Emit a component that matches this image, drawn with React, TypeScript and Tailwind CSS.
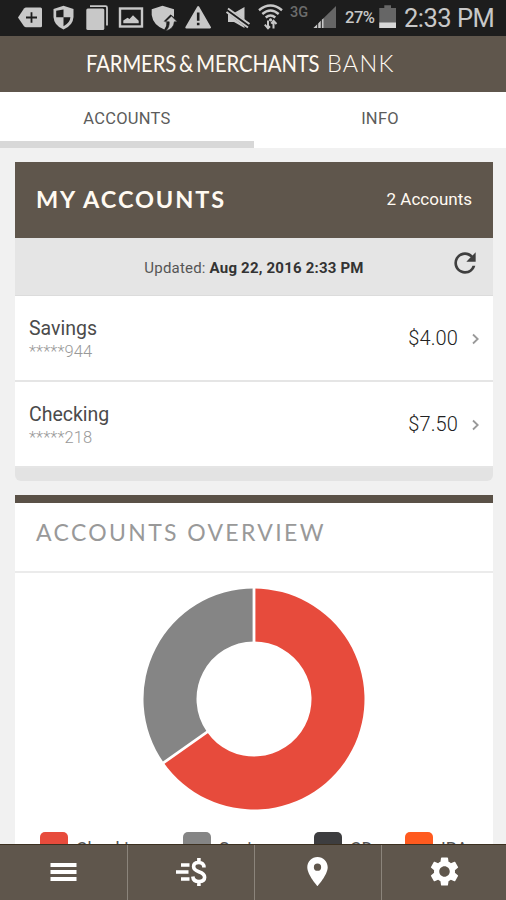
import { MdLocationOn, MdRefresh, MdSettings } from "react-icons/md";

const accounts = [
  { name: "Savings", mask: "*****944", balance: "$4.00" },
  { name: "Checking", mask: "*****218", balance: "$7.50" },
];

const legend = [
  { label: "Checking", swatch: "bg-[#e74b3c]", gap: "w-[143px]" },
  { label: "Savings", swatch: "bg-[#858585]", gap: "w-[131px]" },
  { label: "CD", swatch: "bg-[#3d3d3f]", gap: "w-[91px]" },
  { label: "IRA", swatch: "bg-[#ff5a1f]", gap: "w-[70px]" },
];

function StatusBar() {
  return (
    <div className="flex h-9 shrink-0 bg-[#1d1d1d] pl-[17px] text-[#c8c8c8]">
      <svg className="w-[26px] h-9" viewBox="17 0 26 36">
        <path d="M18 17.5 24 8.5Q25 7.5 26 7.5H40.5Q42 7.5 42 9V26Q42 27.3 40.5 27.3H26Q25 27.3 24 26.2Z" fill="currentColor" />
        <path d="M31.5 12.2v10.6M26 17.5h11" stroke="#1d1d1d" strokeWidth="1.8" />
      </svg>
      <svg className="ml-[9px] w-[24px] h-9" viewBox="52 0 24 36">
        <path d="M63.5 5.8 73.5 9V17Q73 25.5 63.5 29.5Q54 25.5 53.5 17V9Z" fill="currentColor" />
        <path d="M63.5 9.5V17.3H56.2V10.8ZM63.5 17.3H70.4Q70 23 63.5 26.2Z" fill="#1d1d1d" />
      </svg>
      <svg className="ml-[9px] w-[24px] h-9" viewBox="85 0 24 36">
        <path d="M90 6.2H105.5Q107 6.2 107 7.7V25.5" fill="none" stroke="currentColor" strokeWidth="1.8" />
        <rect x="86.3" y="8.5" width="18" height="21.5" rx="1.5" fill="currentColor" />
      </svg>
      <svg className="ml-[9px] w-[26px] h-9" viewBox="118 0 26 36">
        <rect x="120" y="8.5" width="22" height="18" fill="none" stroke="currentColor" strokeWidth="2.4" />
        <path d="M123.3 23.3V20.5L127.5 17.8 129.5 19 133 15.2 138.7 20.8V23.3Z" fill="currentColor" />
      </svg>
      <svg className="ml-[7px] w-[27px] h-9" viewBox="151 0 27 36">
        <path d="M162.5 5.8 174 9.3V17L170.5 14.5 163.5 21.5H166.5Q167 26 164.3 29.5Q153 25 151.7 15V9.3Z" fill="currentColor" />
        <path d="M171.5 16 177.3 21.8H174.3Q174 28.8 165.5 31 169.7 27.5 169.2 21.8H165.5Z" fill="currentColor" stroke="#1d1d1d" strokeWidth=".6" />
      </svg>
      <svg className="ml-[7px] w-[27px] h-9" viewBox="185 0 27 36">
        <path d="M198.2 7 210 27.5H186.3Z" fill="currentColor" stroke="currentColor" strokeWidth="2" strokeLinejoin="round" />
        <path d="M198.2 12.5V20.8M198.2 22.7V25.3" stroke="#1d1d1d" strokeWidth="2.6" />
      </svg>
      <svg className="ml-[13px] w-[26px] h-9" viewBox="225 0 26 36">
        <path d="M228 13H234L244.5 7V28L234 22H228Z" fill="currentColor" />
        <path d="M227 9.8 249 26.5" stroke="#1d1d1d" strokeWidth="5" />
        <path d="M228 8.5 249.5 24M226.5 12 248 27.5" stroke="currentColor" strokeWidth="2" />
      </svg>
      <svg className="ml-[6px] w-[26px] h-9" viewBox="257 0 26 36">
        <g fill="none" stroke="currentColor" strokeWidth="2.4">
          <path d="M259 10.2Q270.5 .7 282 10.2" />
          <path d="M262.3 14Q270.5 7 278.7 14" />
          <path d="M265.7 17.5Q270.5 13.3 275.3 17.5" />
        </g>
        <path d="M270.5 18.3a1.6 1.6 0 1 0 .1 0" fill="currentColor" />
        <path d="M268 20.5V27.5M264.8 24.7 268 28.3 270 26.3M273.5 28.5V21.5M271.3 23.7 273.5 20.8 276.5 24" fill="none" stroke="currentColor" strokeWidth="2" />
      </svg>
      <span className="ml-[7px] mt-[5px] w-[19px] text-[14.5px] leading-4 font-medium text-[#6c6c6c]">3G</span>
      <svg className="ml-[4px] w-[24px] h-9" viewBox="313 0 24 36">
        <path d="M336 6V28H313.5Z" fill="#666" />
        <path d="M323.5 18.2V28H313.5Z" fill="currentColor" />
        <path d="M317.7 22V28M321.3 20V28" stroke="#1d1d1d" strokeWidth="1" />
      </svg>
      <span className="ml-[8px] mt-2 w-[31px] text-[16.5px] leading-5 font-medium tracking-[-0.5px]">27%</span>
      <svg className="ml-[3px] w-[18px] h-9" viewBox="379 0 18 36">
        <path d="M384.3 5.2H391V8H396V28H379.3V8H384.3Z" fill="#666" />
        <path d="M379.3 22.5H396V28H379.3Z" fill="#d7d7d7" />
      </svg>
      <span className="ml-[7px] mt-[3px] text-[25.5px] leading-[30px] tracking-[-0.5px] whitespace-nowrap">2:33 PM</span>
    </div>
  );
}

function AccountRow({ name, mask, balance }: { name: string; mask: string; balance: string }) {
  return (
    <div className="flex h-[86px] items-center border-b-2 border-[#e5e5e5] bg-white pl-3.5 pr-3">
      <div className="flex-1 pt-[3px]">
        <div className="text-[19.5px] leading-6 text-[#4b4b4b]">{name}</div>
        <div className="text-[16.5px] leading-[22px] font-light tracking-[0.1px] text-[#999]">{mask}</div>
      </div>
      <div className="text-[20px] leading-6 font-light tracking-[0.1px] text-[#222]">{balance}</div>
      <svg className="ml-[13px] mt-0.5 h-3 w-2.5" viewBox="0 0 10 12" fill="none" stroke="#999" strokeWidth="1.8">
        <path d="M2 1.5 6.7 6 2 10.5" />
      </svg>
    </div>
  );
}

function Donut() {
  return (
    <svg className="mx-auto block h-[222px] w-[222px]" viewBox="-111 -111 222 222">
      <path d="M0-110.5A110.5 110.5 0 1 1-90.3 63.7L-47 33.1A57.5 57.5 0 1 0 0-57.5Z" fill="#e74b3c" />
      <path d="M-90.3 63.7A110.5 110.5 0 0 1 0-110.5V-57.5A57.5 57.5 0 0 0-47 33.1Z" fill="#858585" />
      <path d="M0-111V-56M-91 64.1-46 32.4" stroke="#fff" strokeWidth="2.8" />
    </svg>
  );
}

function BottomNav() {
  return (
    <nav className="grid h-14 shrink-0 grid-cols-[128px_127px_127px_124px] border-t border-[#3c3020] bg-[#5f564c] text-white">
      <div className="flex items-center justify-center border-r border-[#8b847b]">
        <svg className="-mt-px h-5 w-[27px]" viewBox="0 0 27 20" stroke="#fff" strokeWidth="3.8">
          <path d="M.5 3H26.5M.5 10H26.5M.5 17H26.5" />
        </svg>
      </div>
      <div className="flex items-center justify-center border-r border-[#8b847b]">
        <svg className="-mt-0.5 h-[30px] w-8" viewBox="0 0 32 30" fill="none" stroke="#fff" strokeWidth="3.6">
          <path d="M6 8H14.5M1 15H13.5M6 22H14.5" />
          <path d="M29 10.5Q28.8 5.5 23.8 5.5Q18.6 5.5 18.6 9.6Q18.6 13 23.8 14.7Q29.6 16.5 29.6 20.3Q29.6 24.5 24 24.5Q18.2 24.5 17.8 19.5M23.9 1V6M23.9 24V29" />
        </svg>
      </div>
      <div className="flex items-center justify-center border-r border-[#8b847b] pr-0.5">
        <MdLocationOn className="-mt-0.5 size-[35px]" />
      </div>
      <div className="flex items-center justify-center">
        <MdSettings className="-mt-0.5 size-[35px]" />
      </div>
    </nav>
  );
}

export default function App() {
  return (
    <div className="flex h-[900px] w-[506px] flex-col overflow-hidden bg-[#f1f1f1] font-[Roboto,sans-serif]">
      <StatusBar />

      <header className="flex h-14 shrink-0 items-center bg-[#5f564c] pl-[86px] font-[Lato,sans-serif] text-[22.5px] text-[#fffaf2]">
        <span className="w-[241px] origin-left scale-x-[0.9] tracking-[-0.1px] [word-spacing:-2.5px] whitespace-nowrap">
          FARMERS & MERCHANTS
        </span>
        <span className="font-light tracking-[1.2px] text-[23.5px]">BANK</span>
      </header>

      <div className="flex h-14 shrink-0 bg-white text-[16.5px] text-[#5c5c5c]">
        <div className="flex w-[254px] items-center justify-center border-b-[7px] border-[#d8d8d8] pt-1.5 tracking-[0.25px]">ACCOUNTS</div>
        <div className="flex flex-1 items-center justify-center pb-px tracking-[0.25px]">INFO</div>
      </div>

      <main className="flex-1 overflow-hidden pl-[15px] pr-[13px] pt-3.5">
        <section>
          <div className="flex h-[76px] items-center justify-between bg-[#5f564c] pl-[21px] pr-[21px] text-[#fffaf2]">
            <h1 className="font-[Lato,sans-serif] text-[23.5px] font-bold tracking-[1.9px]">MY ACCOUNTS</h1>
            <span className="text-[17px]">2 Accounts</span>
          </div>
          <div className="relative flex h-[58px] items-center justify-center border-b border-[#dcdcdc] bg-[#e5e5e5] pt-[3px] text-[15px] tracking-[0.2px] text-[#555]">
            <span>
              Updated: <b className="font-bold text-[#333]">Aug 22, 2016 2:33 PM</b>
            </span>
            <MdRefresh className="absolute top-[9px] right-3 size-8 text-[#3f3f3f]" />
          </div>
          {accounts.map((account) => (
            <AccountRow key={account.name} {...account} />
          ))}
          <div className="h-[13px] rounded-b-md bg-[#e3e3e3]" />
        </section>

        <section className="mt-3.5 border-t-8 border-[#5a5147] bg-white">
          <h2 className="h-[70px] border-b-2 border-[#ebebeb] pl-[21px] pt-[11px] font-[Lato,sans-serif] text-[23px] leading-9 tracking-[2.35px] text-[#999]">
            ACCOUNTS OVERVIEW
          </h2>
          <div className="pt-[15px]">
            <Donut />
          </div>
          <div className="mt-[22px] flex pl-[25px] pb-3">
            {legend.map((item) => (
              <div key={item.label} className={`flex shrink-0 items-start ${item.gap}`}>
                <span className={`h-7 w-7 rounded-[5px] ${item.swatch}`} />
                <span className="ml-2 mt-[5px] text-[17.5px] leading-6 text-[#555]">{item.label}</span>
              </div>
            ))}
          </div>
        </section>
      </main>

      <BottomNav />
    </div>
  );
}
